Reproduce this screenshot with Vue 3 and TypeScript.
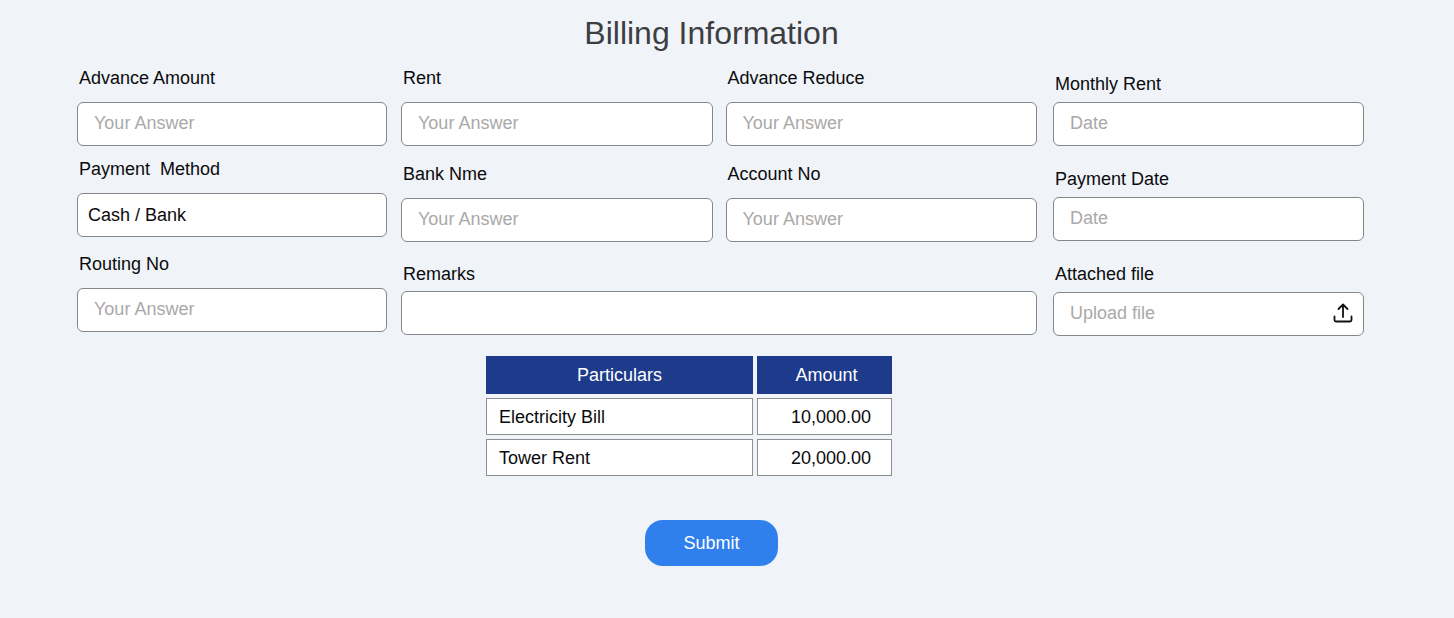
<script setup lang="ts">
import { reactive, ref } from 'vue'

interface Field {
  id: string
  label: string
  placeholder: string
}

interface Particular {
  name: string
  amount: string
}

const routing: Field = { id: 'routing-no', label: 'Routing No', placeholder: 'Your Answer' }
const advance: Field = { id: 'advance-amount', label: 'Advance Amount', placeholder: 'Your Answer' }

const accountFields: Field[] = [
  { id: 'rent', label: 'Rent', placeholder: 'Your Answer' },
  { id: 'advance-reduce', label: 'Advance Reduce', placeholder: 'Your Answer' },
  { id: 'bank-name', label: 'Bank Nme', placeholder: 'Your Answer' },
  { id: 'account-no', label: 'Account No', placeholder: 'Your Answer' },
]

const dateFields: Field[] = [
  { id: 'monthly-rent', label: 'Monthly Rent', placeholder: 'Date' },
  { id: 'payment-date', label: 'Payment Date', placeholder: 'Date' },
]

const particulars: Particular[] = [
  { name: 'Electricity Bill', amount: '10,000.00' },
  { name: 'Tower Rent', amount: '20,000.00' },
]

const values = reactive<Record<string, string>>({})
const method = ref('Cash / Bank')
const fileName = ref('')

function onFile(event: Event) {
  const input = event.target as HTMLInputElement
  fileName.value = input.files?.[0]?.name ?? ''
}
</script>

<template>
  <main class="page">
    <form class="billing" @submit.prevent>
      <h1 class="title">Billing Information</h1>

      <div class="groups">
        <div class="group payment">
          <div class="field">
            <label :for="advance.id">{{ advance.label }}</label>
            <input :id="advance.id" v-model="values[advance.id]" class="control" type="text" :placeholder="advance.placeholder" />
          </div>
          <div class="field">
            <label for="payment-method">Payment&nbsp; Method</label>
            <select id="payment-method" v-model="method" class="control">
              <option>Cash / Bank</option>
            </select>
          </div>
          <div class="field routing">
            <label :for="routing.id">{{ routing.label }}</label>
            <input :id="routing.id" v-model="values[routing.id]" class="control" type="text" :placeholder="routing.placeholder" />
          </div>
        </div>

        <div class="group account">
          <div v-for="field in accountFields" :key="field.id" class="field">
            <label :for="field.id">{{ field.label }}</label>
            <input :id="field.id" v-model="values[field.id]" class="control" type="text" :placeholder="field.placeholder" />
          </div>
          <div class="field remarks">
            <label for="remarks">Remarks</label>
            <input id="remarks" v-model="values.remarks" class="control" type="text" />
          </div>
        </div>

        <div class="group dates">
          <div v-for="field in dateFields" :key="field.id" class="field">
            <label :for="field.id">{{ field.label }}</label>
            <input :id="field.id" v-model="values[field.id]" class="control" type="text" :placeholder="field.placeholder" />
          </div>
          <div class="field">
            <label for="attached-file">Attached file</label>
            <div class="control upload">
              <span class="upload-text">{{ fileName || 'Upload file' }}</span>
              <svg class="upload-icon" viewBox="0 0 20 20" aria-hidden="true">
                <path d="M10 14V1.5M5.5 6L10 1.5L14.5 6M1.5 13.5V17Q1.5 18.5 3 18.5H17Q18.5 18.5 18.5 17V13.5" />
              </svg>
              <input id="attached-file" class="upload-input" type="file" @change="onFile" />
            </div>
          </div>
        </div>
      </div>

      <div class="summary">
        <table>
          <thead>
            <tr>
              <th class="name" scope="col">Particulars</th>
              <th class="amount" scope="col">Amount</th>
            </tr>
          </thead>
          <tbody>
            <tr v-for="row in particulars" :key="row.name">
              <td>{{ row.name }}</td>
              <td class="amount">{{ row.amount }}</td>
            </tr>
          </tbody>
        </table>
      </div>

      <div class="actions">
        <button class="submit" type="submit">Submit</button>
      </div>
    </form>
  </main>
</template>

<style>
html,
body {
  background: #f0f4f9;
}
</style>

<style scoped>
.page,
.page * {
  box-sizing: border-box;
}

.page {
  min-height: 100vh;
  padding: 14px 90px 48px 77px;
  color: #0b0b0d;
  font-family: 'Liberation Sans', Arial, sans-serif;
  font-size: 18px;
  line-height: 24px;
}

.title {
  margin: 0;
  padding-right: 18px;
  color: #3d3e42;
  font-size: 32px;
  font-weight: 400;
  line-height: 38px;
  text-align: center;
}

.groups {
  display: grid;
  grid-template-columns: 310fr 636fr 313fr;
  column-gap: 14px;
  align-items: start;
  padding-top: 14px;
}

.group {
  display: grid;
}

.field {
  display: flex;
  flex-direction: column;
  gap: 12px;
  min-width: 0;
}

.field label {
  padding-left: 2px;
}

.payment {
  row-gap: 11px;
}

.routing {
  padding-top: 4px;
}

.account {
  grid-template-columns: 1fr 1fr;
  gap: 16px 13px;
}

.remarks {
  grid-column: 1 / -1;
  gap: 5px;
  padding-top: 4px;
}

.dates {
  row-gap: 21px;
  padding: 6px 0 0 2px;
}

.dates .field {
  gap: 6px;
}

.control {
  width: 100%;
  height: 44px;
  margin: 0;
  padding: 0 16px 2px;
  border: 1px solid #85868a;
  border-radius: 6px;
  background: #fff;
  color: inherit;
  font: inherit;
}

.control::placeholder {
  color: #a9a9a9;
  opacity: 1;
}

select.control {
  padding: 0 10px;
  appearance: none;
}

.upload {
  position: relative;
  display: flex;
  align-items: center;
  justify-content: space-between;
  padding: 0 10px 2px 16px;
}

.upload-text {
  overflow: hidden;
  color: #a9a9a9;
  text-overflow: ellipsis;
  white-space: nowrap;
}

.upload-icon {
  flex: none;
  width: 20px;
  height: 20px;
  fill: none;
  stroke: #111;
  stroke-width: 1.8;
  stroke-linecap: round;
  stroke-linejoin: round;
}

.upload-input {
  position: absolute;
  inset: 0;
  width: 100%;
  opacity: 0;
  cursor: pointer;
}

.summary {
  display: flex;
  justify-content: center;
  padding: 16px 63px 0 0;
}

table {
  border-spacing: 4px;
}

th,
td {
  height: 37px;
  padding: 0 12px;
}

th {
  height: 38px;
  background: #1e3a8a;
  color: #fff;
  font-weight: 400;
  text-align: center;
}

th.name {
  width: 267px;
}

th.amount {
  width: 135px;
  padding-left: 16px;
}

td {
  border: 1px solid #8d8e92;
  background: #fff;
}

td.amount {
  padding-right: 20px;
  text-align: right;
}

.actions {
  display: flex;
  justify-content: center;
  padding: 40px 18px 0 0;
}

.submit {
  height: 46px;
  padding: 0 38px;
  border: 0;
  border-radius: 18px;
  background: #2f80ed;
  color: #fff;
  font: inherit;
  cursor: pointer;
}
</style>
